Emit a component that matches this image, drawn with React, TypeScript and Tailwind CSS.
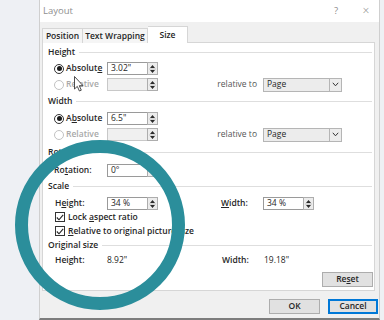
import React from "react";

const Spin = () => (
  <div className="w-[11px] h-[13px] -ml-px border border-[#adadad] bg-[#ececec] flex items-center justify-center">
    <svg width="7" height="10" viewBox="0 0 7 10">
      <path d="M3.5 1 L6 4 H1 Z M3.5 9 L6 6 H1 Z" fill="#2b2b2b" />
      <path d="M0 5 H7" stroke="#adadad" strokeWidth="0.6" />
    </svg>
  </div>
);

const Field = ({ value, disabled }: { value?: string; disabled?: boolean }) => (
  <div className="flex items-center">
    <div
      className={`w-[41px] h-[13px] border flex items-center pl-[3px] ${
        disabled ? "bg-[#f0f0f0] border-[#c8c8c8]" : "bg-white border-[#9a9a9a]"
      }`}
    >
      {value}
    </div>
    <Spin />
  </div>
);

const Dropdown = () => (
  <div className="w-[79px] h-[14px] border border-[#b5b5b5] bg-[#ececec] flex items-center">
    <span className="flex-1 pl-[3px]">Page</span>
    <div className="w-[12px] h-full border-l border-[#b5b5b5] flex items-center justify-center">
      <svg width="7" height="5" viewBox="0 0 7 5">
        <path d="M0.8 0.8 L3.5 3.8 L6.2 0.8" fill="none" stroke="#333" strokeWidth="1" />
      </svg>
    </div>
  </div>
);

const Heading = ({ children, className = "" }: { children: React.ReactNode; className?: string }) => (
  <div className={`flex items-center h-[12px] pl-[5px] pr-[2px] ${className}`}>
    <span className="font-semibold text-[#262626]">{children}</span>
    <div className="flex-1 h-px bg-[#dedede] ml-[4px]" />
  </div>
);

const Radio = ({ checked, disabled }: { checked?: boolean; disabled?: boolean }) => (
  <div
    className={`w-[10px] h-[10px] rounded-full border flex items-center justify-center bg-white ${
      disabled ? "border-[#c2c2c2]" : "border-[#333]"
    }`}
  >
    {checked && <div className="w-[5px] h-[5px] rounded-full bg-[#1a1a1a]" />}
  </div>
);

const Check = () => (
  <div className="w-[10px] h-[10px] border border-[#333] bg-white flex items-center justify-center">
    <svg width="8" height="7" viewBox="0 0 8 7">
      <path d="M0.8 3.5 L3 5.8 L7.2 0.8" fill="none" stroke="#222" strokeWidth="1.1" />
    </svg>
  </div>
);

const OptionRow = ({
  label,
  checked,
  disabled,
  value,
  dropdown,
  className = "",
}: {
  label: React.ReactNode;
  checked?: boolean;
  disabled?: boolean;
  value?: string;
  dropdown?: boolean;
  className?: string;
}) => (
  <div className={`flex items-center h-[13px] ${className}`}>
    <div className="w-[64px] pl-[11px] flex items-center gap-[2px]">
      <Radio checked={checked} disabled={disabled} />
      <span className={`font-semibold ${disabled ? "text-[#a8a8a8]" : "text-[#262626]"}`}>{label}</span>
    </div>
    <Field value={value} disabled={disabled} />
    {dropdown && (
      <>
        <div className="w-[105px] text-right pr-[6px] text-[#555]">relative to</div>
        <Dropdown />
      </>
    )}
  </div>
);

const Button = ({ children, primary, className = "" }: { children: React.ReactNode; primary?: boolean; className?: string }) => (
  <div
    className={`h-[15px] bg-[#e1e1e1] flex items-center justify-center font-semibold text-[#262626] ${
      primary ? "border-2 border-[#0078d7]" : "border border-[#adadad]"
    } ${className}`}
  >
    {children}
  </div>
);

export default function App() {
  return (
    <div className="relative w-[384px] h-[320px] overflow-hidden bg-[#eef0f4] flex font-['Open_Sans',sans-serif] text-[8.5px] leading-none font-medium text-[#262626]">
      <div className="w-[39px] shrink-0" />

      {/* Dialog */}
      <div className="w-[341px] h-[320px] shrink-0 flex flex-col bg-[#f0f0f0] border-x border-[#cfcfcf] border-b-2 border-b-[#7d7d7d]">
        {/* Title bar */}
        <div className="h-[22px] bg-white flex items-center pl-[3px] text-[#8f8f8f] text-[9.5px] font-normal">
          <span className="flex-1">Layout</span>
          <span className="w-[8px] text-center text-[#8a8a8a]">?</span>
          <span className="w-[21px]" />
          <span className="w-[10px] text-center text-[12px] font-light text-[#8a8a8a]">×</span>
          <span className="w-[8px]" />
        </div>

        {/* Tabs */}
        <div className="h-[21px] flex items-end pl-[2px] -mb-px relative z-10">
          <div className="w-[41px] h-[15px] border border-b-0 border-[#d6d6d6] bg-[#f5f5f5] flex items-center justify-center font-semibold">
            Position
          </div>
          <div className="w-[65px] h-[15px] border border-l-0 border-b-0 border-[#d6d6d6] bg-[#f5f5f5] flex items-center justify-center font-semibold">
            Text Wrapping
          </div>
          <div className="w-[40px] h-[17px] border border-l-0 border-b-0 border-[#d6d6d6] bg-white flex items-center justify-center font-semibold">
            Size
          </div>
        </div>

        {/* Panel */}
        <div className="ml-[2px] w-[333px] border border-[#d6d6d6] bg-white flex flex-col pb-[3px]">
          <Heading className="mt-[3px]">Height</Heading>
          <OptionRow
            className="mt-[4px]"
            checked
            value={'3.02"'}
            label={
              <>
                Absolut<span className="underline">e</span>
              </>
            }
          />
          <OptionRow className="mt-[3px]" disabled dropdown label="Relative" />

          <Heading className="mt-[4px]">Width</Heading>
          <OptionRow
            className="mt-[5px]"
            checked
            value={'6.5"'}
            label={
              <>
                A<span className="underline">b</span>solute
              </>
            }
          />
          <OptionRow className="mt-[3px]" disabled dropdown label="Relative" />

          <Heading className="mt-[5px]">Rotation</Heading>
          <div className="mt-[6px] flex items-center h-[13px]">
            <div className="w-[64px] pl-[11px] font-semibold">
              Ro<span className="underline">t</span>ation:
            </div>
            <Field value={'0°'} />
          </div>

          <Heading className="mt-[3px]">Scale</Heading>
          <div className="mt-[5px] flex items-center h-[13px]">
            <div className="w-[64px] pl-[12px] font-semibold">
              H<span className="underline">e</span>ight:
            </div>
            <Field value="34 %" />
            <div className="w-[63px]" />
            <div className="w-[42px] font-semibold">
              <span className="underline">W</span>idth:
            </div>
            <Field value="34 %" />
          </div>
          <div className="mt-[1px] h-[12px] pl-[12px] flex items-center gap-[3px]">
            <Check />
            <span className="font-semibold">
              Lock <span className="underline">a</span>spect ratio
            </span>
          </div>
          <div className="mt-[2px] h-[12px] pl-[12px] flex items-center gap-[3px]">
            <Check />
            <span className="font-semibold">
              <span className="underline">R</span>elative to original picture size
            </span>
          </div>

          <Heading className="mt-[2px]">Original size</Heading>
          <div className="mt-[3px] h-[12px] flex items-center">
            <div className="w-[64px] pl-[12px] font-semibold">Height:</div>
            <div className="w-[115px]">8.92"</div>
            <div className="w-[42px] font-semibold">Width:</div>
            <div>19.18"</div>
          </div>

          <div className="mt-[6px] flex justify-end pr-[1px]">
            <Button className="w-[51px]">
              Re<span className="underline">s</span>et
            </Button>
          </div>
        </div>

        {/* Footer */}
        <div className="mt-[8px] flex justify-end gap-[8px] pr-px">
          <Button className="w-[51px]">OK</Button>
          <Button primary className="w-[50px]">
            Cancel
          </Button>
        </div>
      </div>

      {/* Mouse cursor */}
      <svg className="absolute left-[74px] top-[76px]" width="11" height="16" viewBox="0 0 11 16">
        <path
          d="M0.5 0.5 L0.5 13 L3.3 10.4 L5.4 15 L7.3 14.2 L5.3 9.7 L9 9.7 Z"
          fill="#fff"
          stroke="#3a3a3a"
          strokeWidth="0.9"
          strokeLinejoin="round"
        />
      </svg>

      {/* Highlight ring */}
      <div className="absolute left-[15px] top-[140px] w-[170px] h-[170px] rounded-full border-[13px] border-[#2b8e9b]" />
    </div>
  );
}
